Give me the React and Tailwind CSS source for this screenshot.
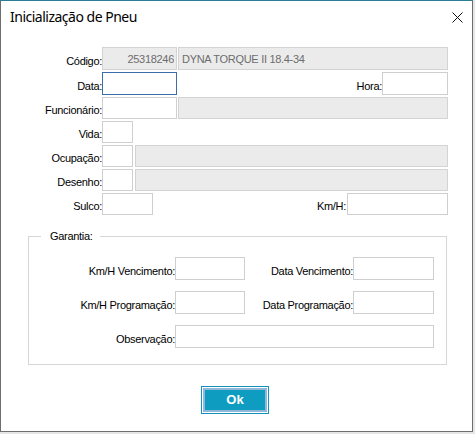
import { useState } from 'react'

const FONT = "font-['Liberation_Sans',Arial,sans-serif] text-[11px] tracking-[-0.3px] leading-none"
const LABEL = `${FONT} text-black`

function Field({ w, grey, focus, value = '', right, h = 'h-[22px]' }) {
  const [v, setV] = useState(value)
  const tone = grey
    ? 'bg-[#ebebeb] border-[#d3d3d3] text-[#6d6d6d]'
    : focus
      ? 'bg-white border-[#3b6ea6] text-black'
      : 'bg-white border-[#cfcfcf] text-black'
  return (
    <input
      value={v}
      readOnly={grey}
      onChange={(e) => setV(e.target.value)}
      className={`${w} ${h} shrink-0 border ${tone} ${right ? 'text-right pr-[2px]' : 'pl-[3px]'} ${FONT} outline-none`}
    />
  )
}

function Label({ children, className = '' }) {
  return <span className={`${LABEL} self-end pb-[3px] text-right whitespace-nowrap ${className}`}>{children}</span>
}

function Row({ children, className = '' }) {
  return <div className={`flex w-[447px] h-[22px] ${className}`}>{children}</div>
}

function GRow({ children, className = '' }) {
  return <div className={`flex w-[405px] h-[23px] ${className}`}>{children}</div>
}

export default function App() {
  return (
    <div className="w-[475px] h-[434px] bg-[#e6e6e6] overflow-hidden">
      <div className="w-[473px] h-[432px] bg-white border border-[#6e6e6e] border-t-[#2a7d98] flex flex-col">
        {/* Title bar */}
        <div className="h-[31px] flex items-center justify-between pl-[9px] pr-[9px] shrink-0">
          <span className="font-['Noto_Sans',sans-serif] text-[14px] text-black tracking-[-0.5px]">Inicialização de Pneu</span>
          <svg width="11" height="11" viewBox="0 0 11 11" className="mt-[1px]">
            <path d="M0.5 0.5 L10.5 10.5 M10.5 0.5 L0.5 10.5" stroke="#111" strokeWidth="1" fill="none" />
          </svg>
        </div>

        {/* Top form */}
        <div className="flex flex-col gap-[2px] mt-[15px]">
          <Row className="h-[23px]">
            <Label className="w-[101px]">Código:</Label>
            <Field w="w-[75px]" h="h-[23px]" grey right value="25318246" />
            <div className="w-[1px]" />
            <Field w="w-[270px]" h="h-[23px]" grey value="DYNA TORQUE II 18.4-34" />
          </Row>
          <Row className="h-[23px]">
            <Label className="w-[101px]">Data:</Label>
            <Field w="w-[75px]" h="h-[23px]" focus />
            <Label className="flex-1">Hora:</Label>
            <Field w="w-[66px]" h="h-[23px]" />
          </Row>
          <Row>
            <Label className="w-[101px]">Funcionário:</Label>
            <Field w="w-[75px]" />
            <div className="w-[1px]" />
            <Field w="w-[270px]" grey />
          </Row>
          <Row>
            <Label className="w-[101px]">Vida:</Label>
            <Field w="w-[31px]" />
          </Row>
          <Row>
            <Label className="w-[101px]">Ocupação:</Label>
            <Field w="w-[31px]" />
            <div className="w-[2px]" />
            <Field w="w-[313px]" grey />
          </Row>
          <Row>
            <Label className="w-[101px]">Desenho:</Label>
            <Field w="w-[31px]" />
            <div className="w-[2px]" />
            <Field w="w-[313px]" grey />
          </Row>
          <Row>
            <Label className="w-[101px]">Sulco:</Label>
            <Field w="w-[51px]" />
            <Label className="flex-1 pr-[1px]">Km/H:</Label>
            <Field w="w-[101px]" />
          </Row>
        </div>

        {/* Garantia */}
        <fieldset className="ml-[27px] mt-[16px] w-[419px] border border-[#d6d6d6] pt-[15px] pb-[16px] flex flex-col gap-[11px]">
          <legend className={`${LABEL} ml-[12px] pl-[9px] pr-[7px] leading-[14px]`}>Garantia:</legend>
          <GRow>
            <Label className="w-[146px]">Km/H Vencimento:</Label>
            <Field w="w-[70px]" h="h-[23px]" />
            <Label className="flex-1">Data Vencimento:</Label>
            <Field w="w-[81px]" h="h-[23px]" />
          </GRow>
          <GRow>
            <Label className="w-[146px]">Km/H Programação:</Label>
            <Field w="w-[70px]" h="h-[23px]" />
            <Label className="flex-1">Data Programação:</Label>
            <Field w="w-[81px]" h="h-[23px]" />
          </GRow>
          <GRow>
            <Label className="w-[146px]">Observação:</Label>
            <Field w="w-[259px]" h="h-[23px]" />
          </GRow>
        </fieldset>

        {/* Ok */}
        <div className="mt-[21px] ml-[200px]">
          <button className="w-[68px] h-[28px] border border-[#1890bd] p-[1px] bg-white block">
            <span className="flex items-center justify-center w-full h-full border-2 border-[#8fb9da] bg-[#0e9cc1] text-white font-bold font-['Liberation_Sans',Arial,sans-serif] text-[13px]">
              Ok
            </span>
          </button>
        </div>
      </div>
    </div>
  )
}
